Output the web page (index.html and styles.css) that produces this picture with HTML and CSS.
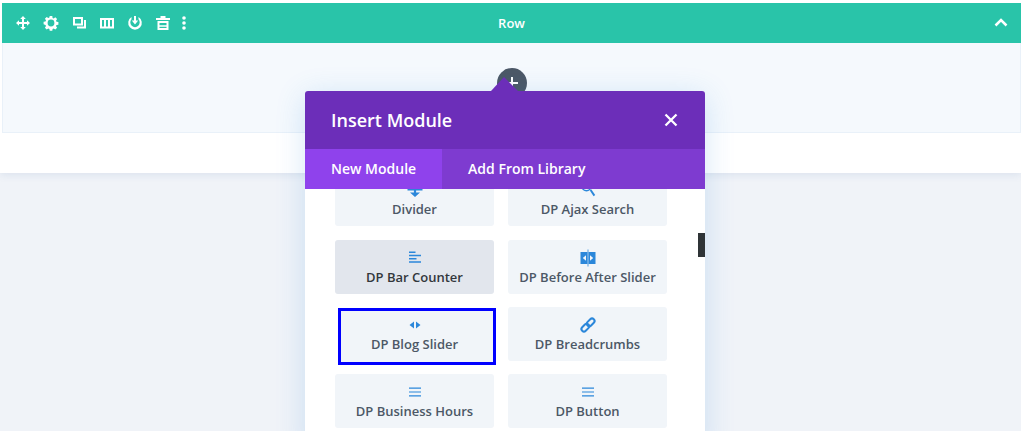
FILE: index.html
```html
<!DOCTYPE html>
<html lang="en">
<head>
    <meta charset="UTF-8">
    <title>Insert Module</title>
    <link rel="stylesheet" href="styles.css">
</head>
<body>
    <section class="section">
        <header class="rowbar">
            <div class="tools">
                <svg class="tool" viewBox="0 0 14 14"><path d="M7 0l2.800 3H8v3h3V4.200L14 7l-3 2.800V8H8v3h1.800L7 14l-2.800-3H6V8H3v1.800L0 7l3-2.800V6h3V3H4.200z"/></svg>
                <svg class="tool" viewBox="0 0 14 14"><path fill-rule="evenodd" d="M5.700 0h2.600l.3 1.900 1.100.5 1.600-1.100 1.800 1.800-1.100 1.600.5 1.100 1.900.3v2.600l-1.900.3-.5 1.100 1.100 1.600-1.800 1.800-1.600-1.100-1.100.5-.3 1.900H5.700l-.3-1.900-1.100-.5-1.600 1.100-1.800-1.800 1.100-1.600-.5-1.100L-.400 8.300V5.700l1.900-.3.5-1.100L.9 2.700l1.800-1.800 1.600 1.100 1.100-.5zM7 3.600a3.400 3.400 0 1 0 0 6.800 3.400 3.400 0 0 0 0-6.800z"/></svg>
                <svg class="tool" viewBox="0 0 14 14"><path d="M2 2h8v6.500H2z M5 11.500h8V4" fill="none" stroke="#fff" stroke-width="2"/></svg>
                <svg class="tool" viewBox="0 0 14 14"><path fill-rule="evenodd" d="M0 2h14v10.500H0zm2 2v6.500h2V4zm4 0v6.500h2V4zm4 0v6.500h2V4z"/></svg>
                <svg class="tool" viewBox="0 0 14 14"><path d="M3.500 1v2.300a4.700 4.700 0 1 0 7 0V1a6.800 6.800 0 1 1-7 0z"/><path d="M6 0h2v4.500h2.200L7 8.500 3.800 4.500H6z"/></svg>
                <svg class="tool" viewBox="0 0 14 14"><path fill-rule="evenodd" d="M4.500 0h5v2H14v2H0V2h4.500zM1.500 5h11v9h-11zm2 2v2.200h7V7zm0 3.800V12h7v-1.200z"/></svg>
                <svg class="tool tool-dots" viewBox="0 0 4 14"><circle cx="2" cy="2" r="1.800"/><circle cx="2" cy="7" r="1.800"/><circle cx="2" cy="12" r="1.800"/></svg>
            </div>
            <span class="rowbar-title">Row</span>
            <svg class="chevron" viewBox="0 0 14 10"><path d="M1.500 7.500L7 2l5.500 5.500" fill="none" stroke="#fff" stroke-width="2.500"/></svg>
        </header>
        <div class="rowbody"></div>
    </section>

    <button class="addbtn" type="button"><span class="addbtn-plus"></span></button>

    <div class="modal">
        <span class="modal-arrow"></span>
        <div class="modal-head">
            <h2>Insert Module</h2>
            <svg class="modal-close" viewBox="0 0 14 14"><path d="M1.500 1.500l11 11m0-11l-11 11" fill="none" stroke="#fff" stroke-width="2.300"/></svg>
        </div>
        <div class="tabs">
            <a class="tab active">New Module</a>
            <a class="tab">Add From Library</a>
        </div>
        <div class="modal-body">
            <div class="modules">
                <div class="module">
                    <svg class="ico" viewBox="0 0 14 14"><path d="M-.500 3h15v4.500H-.500zM5.900 7h2.200v2.500H12l-5 4.500-5-4.500h3.900z"/></svg>
                    <span>Divider</span>
                </div>
                <div class="module">
                    <svg class="ico" viewBox="0 0 14 14"><circle cx="5.500" cy="3.500" r="4.300" fill="none" stroke="#2b87da" stroke-width="1.600"/><path d="M8.800 7.500l1.400-1.300 4 5.800-1.600 1.300z"/></svg>
                    <span>DP Ajax Search</span>
                </div>
                <div class="module hover">
                    <svg class="ico" viewBox="0 0 14 14"><path d="M1 .500h6.500V2H1zM1 3.800h12v1.400H1zM1 7h7.500v1.400H1zM1 10.200h12v1.500H1z"/></svg>
                    <span>DP Bar Counter</span>
                </div>
                <div class="module">
                    <svg class="ico" viewBox="0 0 14 14"><path fill-rule="evenodd" d="M-.500 1h7v12h-7zM5 4.200L1.800 7 5 9.800zM7.500 1h7v12h-7zM9 4.200v5.600L12.200 7z"/><path d="M6.600-1.500h.8v17h-.8z"/></svg>
                    <span>DP Before After Slider</span>
                </div>
                <div class="module focused">
                    <svg class="ico" viewBox="0 0 14 14"><path d="M6 3.500v7L1.500 7zM8 3.500L12.500 7 8 10.500z"/></svg>
                    <span>DP Blog Slider</span>
                </div>
                <div class="module">
                    <svg class="ico" viewBox="0 0 14 14"><g fill="none" stroke="#2b87da" stroke-width="2" transform="rotate(-45 7 7)"><rect x="-1.200" y="4.500" width="8.800" height="5" rx="2.500"/><rect x="6.400" y="4.500" width="8.800" height="5" rx="2.500"/></g></svg>
                    <span>DP Breadcrumbs</span>
                </div>
                <div class="module">
                    <svg class="ico" viewBox="0 0 14 14"><path d="M1 2.500h12v1.200H1zM1 6.400h12v1.200H1zM1 10.300h12v1.200H1z"/></svg>
                    <span>DP Business Hours</span>
                </div>
                <div class="module">
                    <svg class="ico" viewBox="0 0 14 14"><path d="M1 2.500h12v1.200H1zM1 6.400h12v1.200H1zM1 10.300h12v1.200H1z"/></svg>
                    <span>DP Button</span>
                </div>
            </div>
            <span class="scrollthumb"></span>
        </div>
    </div>
</body>
</html>
```

FILE: styles.css
```css
* {
    margin: 0;
    padding: 0;
    box-sizing: border-box;
    font-family: "Open Sans", "Liberation Sans", sans-serif;
}

html, body {
    height: 431px;
    overflow: hidden;
}

body {
    background-color: #f0f3f8;
    position: relative;
}

.section {
    height: 173px;
    padding: 3px 0 0 2px;
    background-color: #fff;
    box-shadow: 0 2px 8px rgba(43, 87, 151, 0.1);
}

.rowbar {
    height: 40px;
    display: flex;
    align-items: center;
    padding: 0 13px 0 14px;
    background-color: #29c4a9;
    color: #fff;
}

.tools {
    display: flex;
    align-items: center;
    gap: 14px;
    flex: 1;
}

.tool {
    width: 14px;
    height: 14px;
    fill: #fff;
    overflow: visible;
}

.tool-dots {
    width: 4px;
    margin-left: -2px;
}

.rowbar-title {
    position: absolute;
    left: 2px;
    right: 0;
    top: 3px;
    line-height: 40px;
    text-align: center;
    font-size: 13px;
    font-weight: 600;
}

.chevron {
    width: 14px;
    height: 10px;
}

.rowbody {
    height: 90px;
    background-color: #f5f9fd;
    border: 1px solid #e9f1f9;
    border-top: 0;
}

.addbtn {
    position: absolute;
    left: 497px;
    top: 68px;
    width: 30px;
    height: 30px;
    border: 0;
    border-radius: 50%;
    background-color: #4c5866;
}

.addbtn-plus {
    position: absolute;
    left: 9px;
    top: 9px;
    width: 12px;
    height: 12px;
    background:
        linear-gradient(#fff, #fff) center / 2px 12px no-repeat,
        linear-gradient(#fff, #fff) center / 12px 2px no-repeat;
}

.modal {
    position: absolute;
    left: 305px;
    top: 91px;
    width: 400px;
    height: 360px;
    background-color: #fff;
    border-radius: 3px 3px 0 0;
    box-shadow: 0 5px 30px rgba(43, 135, 218, 0.2);
}

.modal-arrow {
    position: absolute;
    left: 186px;
    top: -14px;
    border-left: 13px solid transparent;
    border-right: 14px solid transparent;
    border-bottom: 14px solid #6c2eb9;
}

.modal-head {
    height: 58px;
    display: flex;
    align-items: center;
    justify-content: space-between;
    padding: 0 27px 0 26px;
    background-color: #6c2eb9;
    border-radius: 3px 3px 0 0;
    color: #fff;
}

.modal-head h2 {
    font-size: 18px;
    font-weight: 600;
}

.modal-close {
    width: 14px;
    height: 14px;
}

.tabs {
    height: 40px;
    display: flex;
    background-color: #7e3bd0;
    position: relative;
}

.tab {
    line-height: 40px;
    padding: 0 26px;
    font-size: 14px;
    font-weight: 600;
    color: #fff;
}

.tab.active {
    background-color: #8f42ec;
}

.modal-body {
    position: relative;
    height: 262px;
    overflow: hidden;
}

.modules {
    display: grid;
    grid-template-columns: 159px 159px;
    grid-template-rows: 55px 54px 54px 54px;
    column-gap: 14px;
    row-gap: 13px;
    margin-top: -17px;
    padding-left: 30px;
}

.module {
    display: flex;
    flex-direction: column;
    align-items: center;
    height: 54px;
    padding-top: 11px;
    background-color: #f1f5f9;
    border-radius: 3px;
    font-size: 13px;
    font-weight: 600;
    line-height: 18px;
    color: #4c5866;
}

.module .ico {
    width: 14px;
    height: 14px;
    margin-bottom: 3px;
    fill: #2b87da;
    overflow: visible;
}

.module.hover {
    background-color: #e2e6ed;
    color: #32373c;
}

/* el foco va desplazado respecto a la tarjeta */
.module.focused {
    height: 57px;
    margin: 1px -2px -4px 3px;
    padding: 7px 5px 0 0;
    border: 3px solid #0000ff;
    border-radius: 0;
}

.scrollthumb {
    position: absolute;
    right: 0;
    top: 44px;
    width: 7px;
    height: 24px;
    background-color: #2f3437;
}
```
